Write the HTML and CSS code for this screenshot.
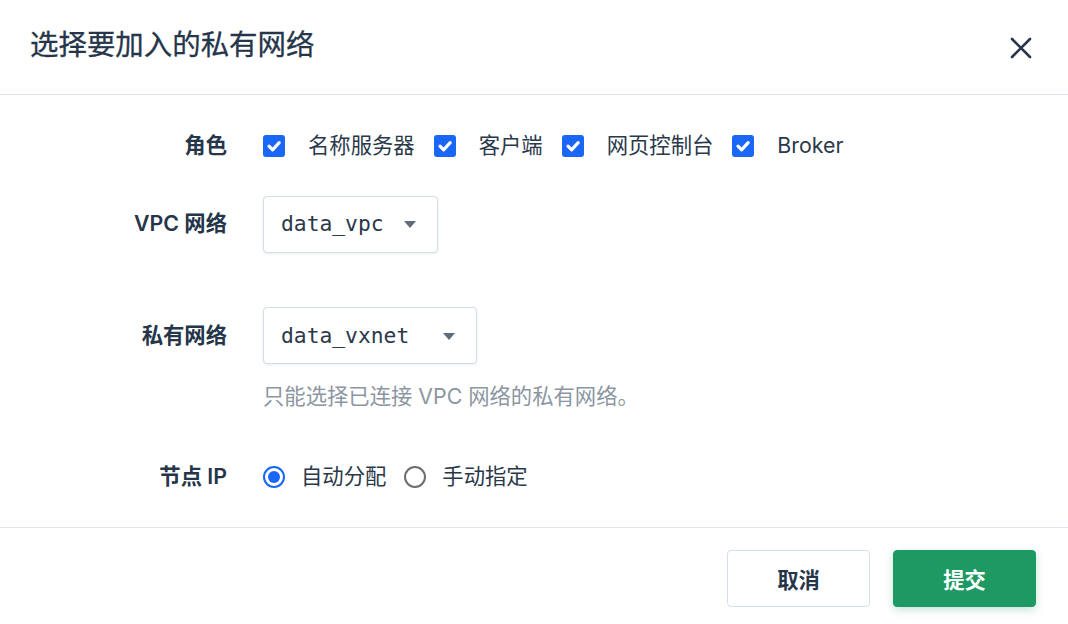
FILE: index.html
```html
<!DOCTYPE html>
<html lang="zh-CN">
<head>
<meta charset="utf-8">
<title>选择要加入的私有网络</title>
<link rel="stylesheet" href="styles.css">
</head>
<body>
<div class="dialog">
  <header class="dialog-header">
    <h1 class="dialog-title">选择要加入的私有网络</h1>
    <button class="close-btn" aria-label="关闭">
      <svg width="22" height="22" viewBox="0 0 22 22"><path d="M2 2 L20 20 M20 2 L2 20" stroke="#26364a" stroke-width="2.6" stroke-linecap="round" fill="none"/></svg>
    </button>
  </header>

  <main class="dialog-body">
    <div class="form-row row-roles">
      <div class="form-label">角色</div>
      <div class="form-control checks">
        <label class="check-item"><span class="checkbox"><svg width="22" height="22" viewBox="0 0 22 22"><path d="M6 11.2 L9.6 14.8 L16.2 7.6" stroke="#fff" stroke-width="3.2" stroke-linecap="round" stroke-linejoin="round" fill="none"/></svg></span><span class="check-text">名称服务器</span></label>
        <label class="check-item"><span class="checkbox"><svg width="22" height="22" viewBox="0 0 22 22"><path d="M6 11.2 L9.6 14.8 L16.2 7.6" stroke="#fff" stroke-width="3.2" stroke-linecap="round" stroke-linejoin="round" fill="none"/></svg></span><span class="check-text">客户端</span></label>
        <label class="check-item"><span class="checkbox"><svg width="22" height="22" viewBox="0 0 22 22"><path d="M6 11.2 L9.6 14.8 L16.2 7.6" stroke="#fff" stroke-width="3.2" stroke-linecap="round" stroke-linejoin="round" fill="none"/></svg></span><span class="check-text">网页控制台</span></label>
        <label class="check-item"><span class="checkbox"><svg width="22" height="22" viewBox="0 0 22 22"><path d="M6 11.2 L9.6 14.8 L16.2 7.6" stroke="#fff" stroke-width="3.2" stroke-linecap="round" stroke-linejoin="round" fill="none"/></svg></span><span class="check-text">Broker</span></label>
      </div>
    </div>

    <div class="form-row row-vpc">
      <div class="form-label">VPC 网络</div>
      <div class="form-control">
        <div class="select select-vpc"><span class="select-value">data_vpc</span><span class="caret"></span></div>
      </div>
    </div>

    <div class="form-row row-vxnet">
      <div class="form-label">私有网络</div>
      <div class="form-control stacked">
        <div class="select select-vxnet"><span class="select-value">data_vxnet</span><span class="caret"></span></div>
        <p class="hint">只能选择已连接 VPC 网络的私有网络。</p>
      </div>
    </div>

    <div class="form-row row-ip">
      <div class="form-label">节点 IP</div>
      <div class="form-control radios">
        <label class="radio-item"><span class="radio checked"></span><span>自动分配</span></label>
        <label class="radio-item"><span class="radio"></span><span>手动指定</span></label>
      </div>
    </div>
  </main>

  <footer class="dialog-footer">
    <button class="btn btn-cancel">取消</button>
    <button class="btn btn-primary">提交</button>
  </footer>
</div>
</body>
</html>
```

FILE: styles.css
```css
* { box-sizing: border-box; }

html, body {
  margin: 0;
  padding: 0;
  background: #ffffff;
}

body {
  font-family: "Inter", "Noto Sans CJK SC", sans-serif;
  font-size: 21.33px;
  color: #2a384a;
  width: 1068px;
  height: 624px;
  overflow: hidden;
}

.dialog {
  display: flex;
  flex-direction: column;
  height: 624px;
}

.dialog-header {
  height: 95px;
  border-bottom: 1px solid #dfe6ee;
  display: flex;
  align-items: center;
  justify-content: space-between;
  padding: 0 36px 0 30px;
}

.dialog-title {
  margin: 0;
  font-size: 28.44px;
  font-weight: 400;
  color: #26364a;
  line-height: 1;
  padding-bottom: 4px;
  -webkit-text-stroke: 0.3px #26364a;
}

.close-btn {
  border: none;
  background: none;
  padding: 0;
  width: 22px;
  height: 22px;
  display: flex;
  margin-top: 2px;
}

.dialog-body {
  flex: 1;
  padding-top: 23px;
}

.form-row {
  display: flex;
  align-items: center;
  gap: 36px;
}

.form-label {
  width: 227px;
  text-align: right;
  font-weight: 600;
  color: #26364a;
  line-height: 1;
  flex-shrink: 0;
}

.form-control {
  display: flex;
  align-items: center;
}

.row-roles { height: 56px; }
.row-vpc { height: 56px; margin-top: 22px; }
.row-vxnet { margin-top: 55px; align-items: flex-start; }
.row-vxnet .form-label { line-height: 57px; }
.row-ip { height: 56px; margin-top: 37px; }

.stacked {
  flex-direction: column;
  align-items: flex-start;
}

.checks { gap: 19px; }

.check-item {
  display: flex;
  align-items: center;
  gap: 23px;
  line-height: 1;
}

.checkbox {
  width: 22px;
  height: 22px;
  border-radius: 3px;
  background: #1a66f5;
  display: flex;
  flex-shrink: 0;
}

.select {
  position: relative;
  height: 57px;
  border: 1px solid #d3dbe5;
  border-radius: 4px;
  box-shadow: 0 1px 3px rgba(30, 50, 80, 0.08);
  display: flex;
  align-items: center;
  padding-left: 17px;
  background: #fff;
}

.select-vpc { width: 175px; }
.select-vxnet { width: 214px; }

.select-value {
  font-family: "DejaVu Sans Mono", "Liberation Mono", monospace;
  font-size: 21.3px;
  color: #2a384a;
  line-height: 1;
}

.caret {
  position: absolute;
  right: 21px;
  top: 50%;
  margin-top: -3px;
  width: 0;
  height: 0;
  border-left: 6px solid transparent;
  border-right: 6px solid transparent;
  border-top: 7px solid #5f6b7a;
}

.hint {
  margin: 16px 0 0;
  color: #8b96a2;
  line-height: 32px;
}

.radios { gap: 18px; }

.radio-item {
  display: flex;
  align-items: center;
  gap: 16px;
  line-height: 1;
}

.radio {
  width: 22px;
  height: 22px;
  border-radius: 50%;
  border: 2px solid #6e6e6e;
  background: #fff;
  flex-shrink: 0;
  display: flex;
  align-items: center;
  justify-content: center;
}

.radio.checked {
  border-color: #1a66f5;
}

.radio.checked::after {
  content: "";
  width: 12px;
  height: 12px;
  border-radius: 50%;
  background: #1a66f5;
}

.dialog-footer {
  border-top: 1px solid #dfe6ee;
  height: 97px;
  display: flex;
  justify-content: flex-end;
  align-items: flex-start;
  gap: 23px;
  padding: 22px 32px 0 0;
}

.btn {
  width: 143px;
  height: 57px;
  border-radius: 4px;
  font-family: "Inter", "Noto Sans CJK SC", sans-serif;
  font-size: 21.33px;
  font-weight: 600;
  cursor: pointer;
}

.btn-cancel {
  background: #fff;
  border: 1px solid #d6dfe9;
  color: #26364a;
}

.btn-primary {
  background: #1e9964;
  border: 1px solid #1e9964;
  color: #fff;
  box-shadow: 0 3px 8px rgba(30, 153, 100, 0.25);
}
```
